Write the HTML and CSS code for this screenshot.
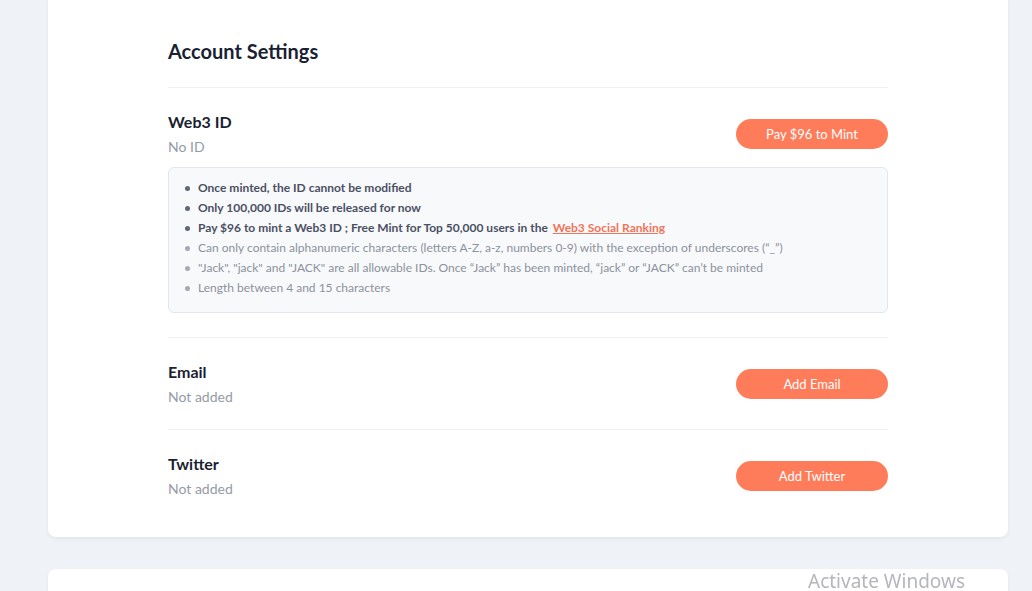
FILE: index.html
```html
<!DOCTYPE html>
<html lang="en">
<head>
    <meta charset="UTF-8">
    <meta name="viewport" content="width=device-width, initial-scale=1.0">
    <title>Account Settings</title>
    <link rel="stylesheet" href="styles.css">
</head>
<body>
    <div class="page">
        <div class="card">
            <h2 class="card-title">Account Settings</h2>

            <div class="setting">
                <div class="setting-row">
                    <div>
                        <div class="setting-label">Web3 ID</div>
                        <div class="setting-value">No ID</div>
                    </div>
                    <button class="btn">Pay $96 to Mint</button>
                </div>
                <div class="info-box">
                    <ul class="rules">
                        <li class="strong">Once minted, the ID cannot be modified</li>
                        <li class="strong">Only 100,000 IDs will be released for now</li>
                        <li class="strong">Pay $96 to mint a Web3 ID ; Free Mint for Top 50,000 users in the <a href="#">Web3 Social Ranking</a></li>
                        <li>Can only contain alphanumeric characters (letters A-Z, a-z, numbers 0-9) with the exception of underscores (“_”)</li>
                        <li>"Jack", "jack" and "JACK" are all allowable IDs. Once “Jack” has been minted, “jack” or “JACK” can’t be minted</li>
                        <li>Length between 4 and 15 characters</li>
                    </ul>
                </div>
            </div>

            <div class="setting">
                <div class="setting-row">
                    <div>
                        <div class="setting-label">Email</div>
                        <div class="setting-value">Not added</div>
                    </div>
                    <button class="btn">Add Email</button>
                </div>
            </div>

            <div class="setting last">
                <div class="setting-row">
                    <div>
                        <div class="setting-label">Twitter</div>
                        <div class="setting-value">Not added</div>
                    </div>
                    <button class="btn">Add Twitter</button>
                </div>
            </div>
        </div>

        <div class="card next"></div>
    </div>

    <div class="watermark">Activate Windows</div>
</body>
</html>
```

FILE: styles.css
```css
body {
    margin: 0;
    background-color: #eff2f6;
    font-family: 'Lato', 'Noto Sans', sans-serif;
    color: #1b1f32;
    overflow: hidden;
}

.page {
    padding: 0 24px 0 48px;
    margin-top: -10px;
}

.card {
    background-color: #fff;
    border-radius: 8px;
    box-shadow: 0 2px 4px rgba(30, 40, 70, 0.06);
    padding: 47px 120px 38px;
}

.card.next {
    margin-top: 32px;
    height: 60px;
    padding: 0;
}

.card-title {
    margin: 0;
    font-size: 20px;
    line-height: 28px;
    font-weight: 700;
    padding-bottom: 22px;
    border-bottom: 1px solid #eef0f3;
}

.setting {
    padding: 22px 0 22px;
    border-bottom: 1px solid #eef0f3;
}

.setting.last {
    border-bottom: none;
    padding-bottom: 0;
}

.setting-row {
    display: flex;
    justify-content: space-between;
    align-items: center;
}

.setting-label {
    font-size: 16px;
    line-height: 24px;
    font-weight: 700;
}

.setting-value {
    margin-top: 3px;
    font-size: 14px;
    line-height: 20px;
    color: #959aa6;
}

.btn {
    width: 152px;
    height: 30px;
    border: none;
    border-radius: 15px;
    background-color: #ff7c5b;
    color: #fff;
    font-family: inherit;
    font-size: 13px;
    cursor: pointer;
}

.info-box {
    margin: 10px 0 2px;
    background-color: #f8f9fb;
    border: 1px solid #e3e6ec;
    border-radius: 6px;
    padding: 10px 16px 14px;
}

.rules {
    list-style: none;
    margin: 0;
    padding: 0;
}

.rules li {
    position: relative;
    padding-left: 13px;
    font-size: 12px;
    line-height: 20px;
    color: #8c919d;
}

.rules li::before {
    content: '';
    position: absolute;
    left: 0;
    top: 8px;
    width: 5px;
    height: 5px;
    border-radius: 50%;
    background-color: #a4a9b3;
}

.rules li.strong {
    color: #4a5064;
    font-weight: 700;
}

.rules li.strong::before {
    background-color: #60667a;
}

.rules a {
    color: #f0745a;
    margin-left: 2px;
}

.watermark {
    position: fixed;
    left: 808px;
    top: 568px;
    font-family: 'Noto Sans', sans-serif;
    font-size: 19px;
    color: #b3b6ba;
}
```
